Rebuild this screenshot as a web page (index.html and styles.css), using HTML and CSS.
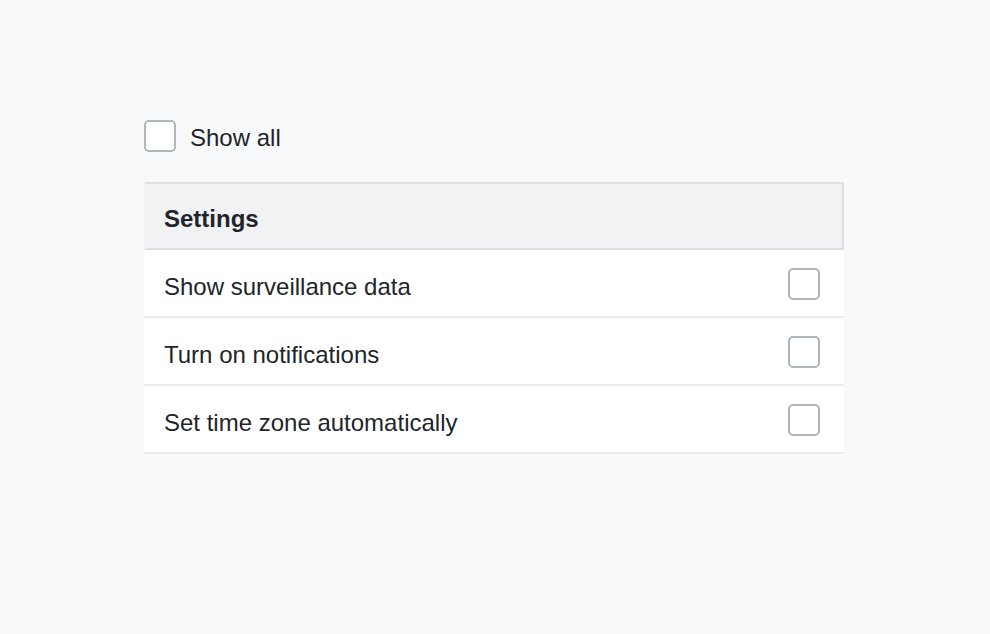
FILE: index.html
```html
<!DOCTYPE html>
<html>
<head>
<meta charset="utf-8">
<link rel="stylesheet" href="styles.css">
</head>
<body>
<div class="page">
  <label class="show-all">
    <span class="box"></span>
    <span class="label">Show all</span>
  </label>
  <div class="panel">
    <div class="panel-head"><span class="text">Settings</span></div>
    <div class="row"><span class="text">Show surveillance data</span><span class="box"></span></div>
    <div class="row"><span class="text">Turn on notifications</span><span class="box"></span></div>
    <div class="row"><span class="text">Set time zone automatically</span><span class="box"></span></div>
  </div>
</div>
</body>
</html>
```
FILE: styles.css
```css
html, body {
  margin: 0;
  padding: 0;
  background: #f8f9fa;
}
body {
  font-family: "Liberation Sans", Arial, sans-serif;
  font-size: 24px;
  color: #212529;
}
.page {
  width: 700px;
  padding: 120px 0 0 144px;
}
.show-all {
  display: flex;
  align-items: center;
  gap: 14px;
  height: 32px;
}
.show-all .label {
  padding-top: 4px;
}
.box {
  box-sizing: border-box;
  width: 32px;
  height: 32px;
  border: 2px solid #adb5bd;
  border-radius: 5px;
  background: #fff;
  flex: none;
}
.panel {
  margin-top: 30px;
}
.panel-head {
  box-sizing: border-box;
  height: 68px;
  display: flex;
  align-items: center;
  padding: 0 18px;
  background: #f1f2f4;
  border: 2px solid #dee2e6;
  border-left-color: #f1f2f4;
  font-weight: bold;
}
.panel-head .text {
  padding-top: 6px;
}
.row {
  box-sizing: border-box;
  height: 68px;
  display: flex;
  align-items: center;
  justify-content: space-between;
  padding: 0 24px 0 20px;
  background: #fff;
  border-bottom: 2px solid #e9ecef;
}
.row .text {
  padding-top: 7px;
}
.row .box {
  margin-top: 2px;
}
```
